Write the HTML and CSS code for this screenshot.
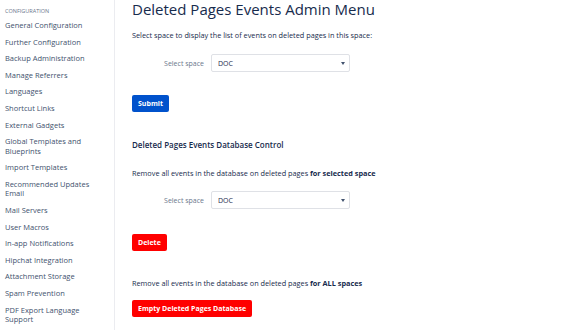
FILE: index.html
```html
<!DOCTYPE html>
<html lang="en">
<head>
    <meta charset="UTF-8">
    <title>Deleted Pages Events Admin Menu</title>
    <link rel="stylesheet" href="styles.css">
</head>
<body>
    <div class="admin-page">
        <div class="admin-sidebar">
            <div class="sidebar-heading">Configuration</div>
            <ul class="sidebar-list">
                <li><a href="#">General Configuration</a></li>
                <li><a href="#">Further Configuration</a></li>
                <li><a href="#">Backup Administration</a></li>
                <li><a href="#">Manage Referrers</a></li>
                <li><a href="#">Languages</a></li>
                <li><a href="#">Shortcut Links</a></li>
                <li><a href="#">External Gadgets</a></li>
                <li><a href="#">Global Templates and Blueprints</a></li>
                <li><a href="#">Import Templates</a></li>
                <li><a href="#">Recommended Updates Email</a></li>
                <li><a href="#">Mail Servers</a></li>
                <li><a href="#">User Macros</a></li>
                <li><a href="#">In-app Notifications</a></li>
                <li><a href="#">Hipchat Integration</a></li>
                <li><a href="#">Attachment Storage</a></li>
                <li><a href="#">Spam Prevention</a></li>
                <li><a href="#">PDF Export Language Support</a></li>
            </ul>
        </div>

        <div class="admin-content">
            <h1 class="page-title">Deleted Pages Events Admin Menu</h1>
            <p class="page-text page-text-intro">Select space to display the list of events on deleted pages in this space:</p>

            <div class="field-group field-group-first">
                <label class="field-label" for="spaceList">Select space</label>
                <div class="select-wrap">
                    <select id="spaceList" class="field-select">
                        <option>DOC</option>
                    </select>
                </div>
            </div>
            <button class="btn btn-primary">Submit</button>

            <h2 class="section-title">Deleted Pages Events Database Control</h2>
            <p class="page-text page-text-selected">Remove all events in the database on deleted pages <strong>for selected space</strong></p>

            <div class="field-group">
                <label class="field-label" for="spaceDelete">Select space</label>
                <div class="select-wrap">
                    <select id="spaceDelete" class="field-select">
                        <option>DOC</option>
                    </select>
                </div>
            </div>
            <button class="btn btn-danger btn-delete">Delete</button>

            <p class="page-text page-text-all">Remove all events in the database on deleted pages <strong>for ALL spaces</strong></p>
            <button class="btn btn-danger btn-empty">Empty Deleted Pages Database</button>
        </div>
    </div>
</body>
</html>
```
FILE: styles.css
```css
body {
    margin: 0;
    font-family: 'Open Sans', sans-serif;
    color: #172b4d;
    background: #fff;
}

.admin-page {
    display: flex;
    height: 330px;
    overflow: hidden;
}

/* Sidebar */
.admin-sidebar {
    width: 115px;
    flex-shrink: 0;
    border-right: 1px solid #ebecf0;
    padding: 8px 14px 0 5px;
    box-sizing: border-box;
}

.sidebar-heading {
    font-size: 5.5px;
    line-height: 7.5px;
    text-transform: uppercase;
    color: #6b778c;
    margin-bottom: 2px;
}

.sidebar-list {
    list-style: none;
    margin: 0;
    padding: 0;
}

.sidebar-list li {
    font-size: 7.5px;
    line-height: 9.5px;
    padding: 3.55px 0;
}

.sidebar-list a {
    color: #42526e;
    text-decoration: none;
}

/* Main content */
.admin-content {
    flex: 1;
    padding: 0 0 0 17px;
}

.page-title {
    font-size: 15px;
    font-weight: 500;
    margin: -1px 0 0;
    line-height: 20px;
}

.page-text {
    font-size: 7.3px;
    margin: 0;
    line-height: 10px;
}

.page-text strong {
    font-weight: 700;
}

.page-text-intro {
    margin-top: 11px;
}

.page-text-selected {
    margin-top: 17px;
}

.page-text-all {
    margin-top: 27px;
}

.field-group {
    display: flex;
    align-items: center;
    margin-top: 13px;
}

.field-group-first {
    margin-top: 14px;
}

.field-label {
    width: 72px;
    text-align: right;
    padding-right: 7px;
    font-size: 7px;
    color: #6b778c;
}

.select-wrap {
    position: relative;
}

.select-wrap:after {
    content: '';
    position: absolute;
    right: 5px;
    top: 8px;
    border-left: 2px solid transparent;
    border-right: 2px solid transparent;
    border-top: 3px solid #42526e;
    pointer-events: none;
}

.field-select {
    display: block;
    width: 139px;
    height: 18px;
    appearance: none;
    -webkit-appearance: none;
    font-family: inherit;
    font-size: 7px;
    color: #172b4d;
    border: 1px solid #dfe1e6;
    border-radius: 2px;
    background: #fff;
    padding: 0 6px;
}

.btn {
    display: block;
    border: none;
    border-radius: 2px;
    color: #fff;
    font-family: inherit;
    font-size: 7px;
    font-weight: 700;
    height: 17px;
    padding: 0 6px;
    cursor: pointer;
}

.btn-primary {
    background-color: #0052cc;
    margin-top: 23px;
}

.btn-danger {
    background-color: #ff0000;
}

.btn-delete {
    margin-top: 25px;
}

.btn-empty {
    margin-top: 12px;
}

.section-title {
    font-size: 8px;
    font-weight: 600;
    margin: 27px 0 0;
    line-height: 12px;
}
```
